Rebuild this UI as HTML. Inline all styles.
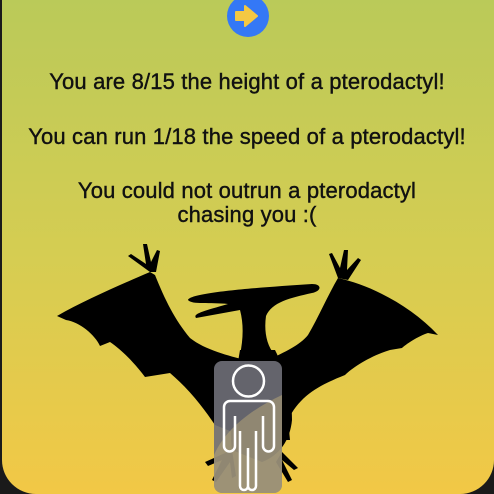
<!DOCTYPE html>
<html><head><style>
html,body{margin:0;padding:0;width:494px;height:494px;overflow:hidden;background:#1a1a1a}
.card{position:absolute;left:2px;top:-40px;width:492px;height:534px;border-radius:0 0 34px 34px;background:linear-gradient(#b6c95a 0%,#d5cd52 55%,#f2c846 100%);overflow:hidden}
.t{position:absolute;left:0;width:494px;text-align:center;font-family:"Liberation Sans",sans-serif;font-size:22px;letter-spacing:0.15px;-webkit-text-stroke:0.4px #111;color:#111;line-height:24px;white-space:nowrap}
</style></head><body>
<div class="card"></div>
<svg width="494" height="494" style="position:absolute;left:0;top:0">
<circle cx="248" cy="16" r="21" fill="#3478f6"/>
<path d="M236 12 h9 v-6 l12 10 l-12 10 v-6 h-9 z" fill="#f4c843" stroke="#f4c843" stroke-width="2" stroke-linejoin="round"/>
<g fill="#000">
<path d="M150 272 C120 285 85 300 57 316 L66 320 C80 322 95 335 100 346 L110 342 C125 352 140 370 145 377 L170 373 C190 390 205 410 215 425 L240 435 L245 360 C230 356 205 350 190 338 C175 320 165 300 155 275 Z"/>
<path d="M338 278 C370 285 410 305 438 335 L428 333 C418 336 405 345 402 348 L390 350 C370 356 352 368 345 375 C320 385 300 395 288 420 L290 440 L265 440 L268 360 C285 352 300 345 308 335 C318 318 328 295 338 278 Z"/>
<path d="M240 350 C235 380 228 420 232 450 L262 462 C280 455 290 440 292 420 C292 395 285 370 275 350 Z"/>
<path d="M240 355 C243 340 244 325 240 310 L196 318 C193 314 200 312 228 304 C210 302 192 305 188 300 C190 293 250 288 312 284 C322 284 322 291 312 293 C290 298 272 302 266 316 C264 330 266 345 275 355 Z"/>
<path d="M150 272 L128 256 L131 254 L146 264 L143 244 L147 244 L151 262 L157 250 L160 251 L156 272 Z"/>
<path d="M338 278 L329 254 L332 253 L340 268 L344 250 L348 250 L347 270 L358 258 L361 260 L348 280 Z"/>
<path d="M232 450 L205 462 L208 466 L222 460 L212 480 L216 482 L230 462 L232 478 L236 476 Z"/>
<path d="M282 452 L298 468 L294 470 L282 460 L292 480 L288 482 L276 462 Z"/>
</g>
<rect x="214" y="361" width="68" height="132" rx="8" fill="#6f6f78" fill-opacity="0.9"/>
<path d="M214 455 C225 430 250 410 282 395 L282 485 a8 8 0 0 1 -8 8 L222 493 a8 8 0 0 1 -8 -8 Z" fill="#c6b27a" fill-opacity="0.45"/>
<g fill="none" stroke="#fff" stroke-width="2.5" stroke-linejoin="round">
<circle cx="248.5" cy="381" r="15.5"/>
<path d="M240 431 V486 a4 4 0 0 0 8 0 V448 M248 448 V486 a4 4 0 0 0 8 0 V431 M235 446 a3 3 0 0 1 -11 0 V407 a6 6 0 0 1 6 -6 H268 a6 6 0 0 1 6 6 V446 a3 3 0 0 1 -11 0 M235 446 V416 M263 446 V416 M235 431 V446"/>
</g>
</svg>
<div class="t" style="top:70px">You are 8/15 the height of a pterodactyl!</div>
<div class="t" style="top:125px">You can run 1/18 the speed of a pterodactyl!</div>
<div class="t" style="top:179px">You could not outrun a pterodactyl<br>chasing you :(</div>
</body></html>
